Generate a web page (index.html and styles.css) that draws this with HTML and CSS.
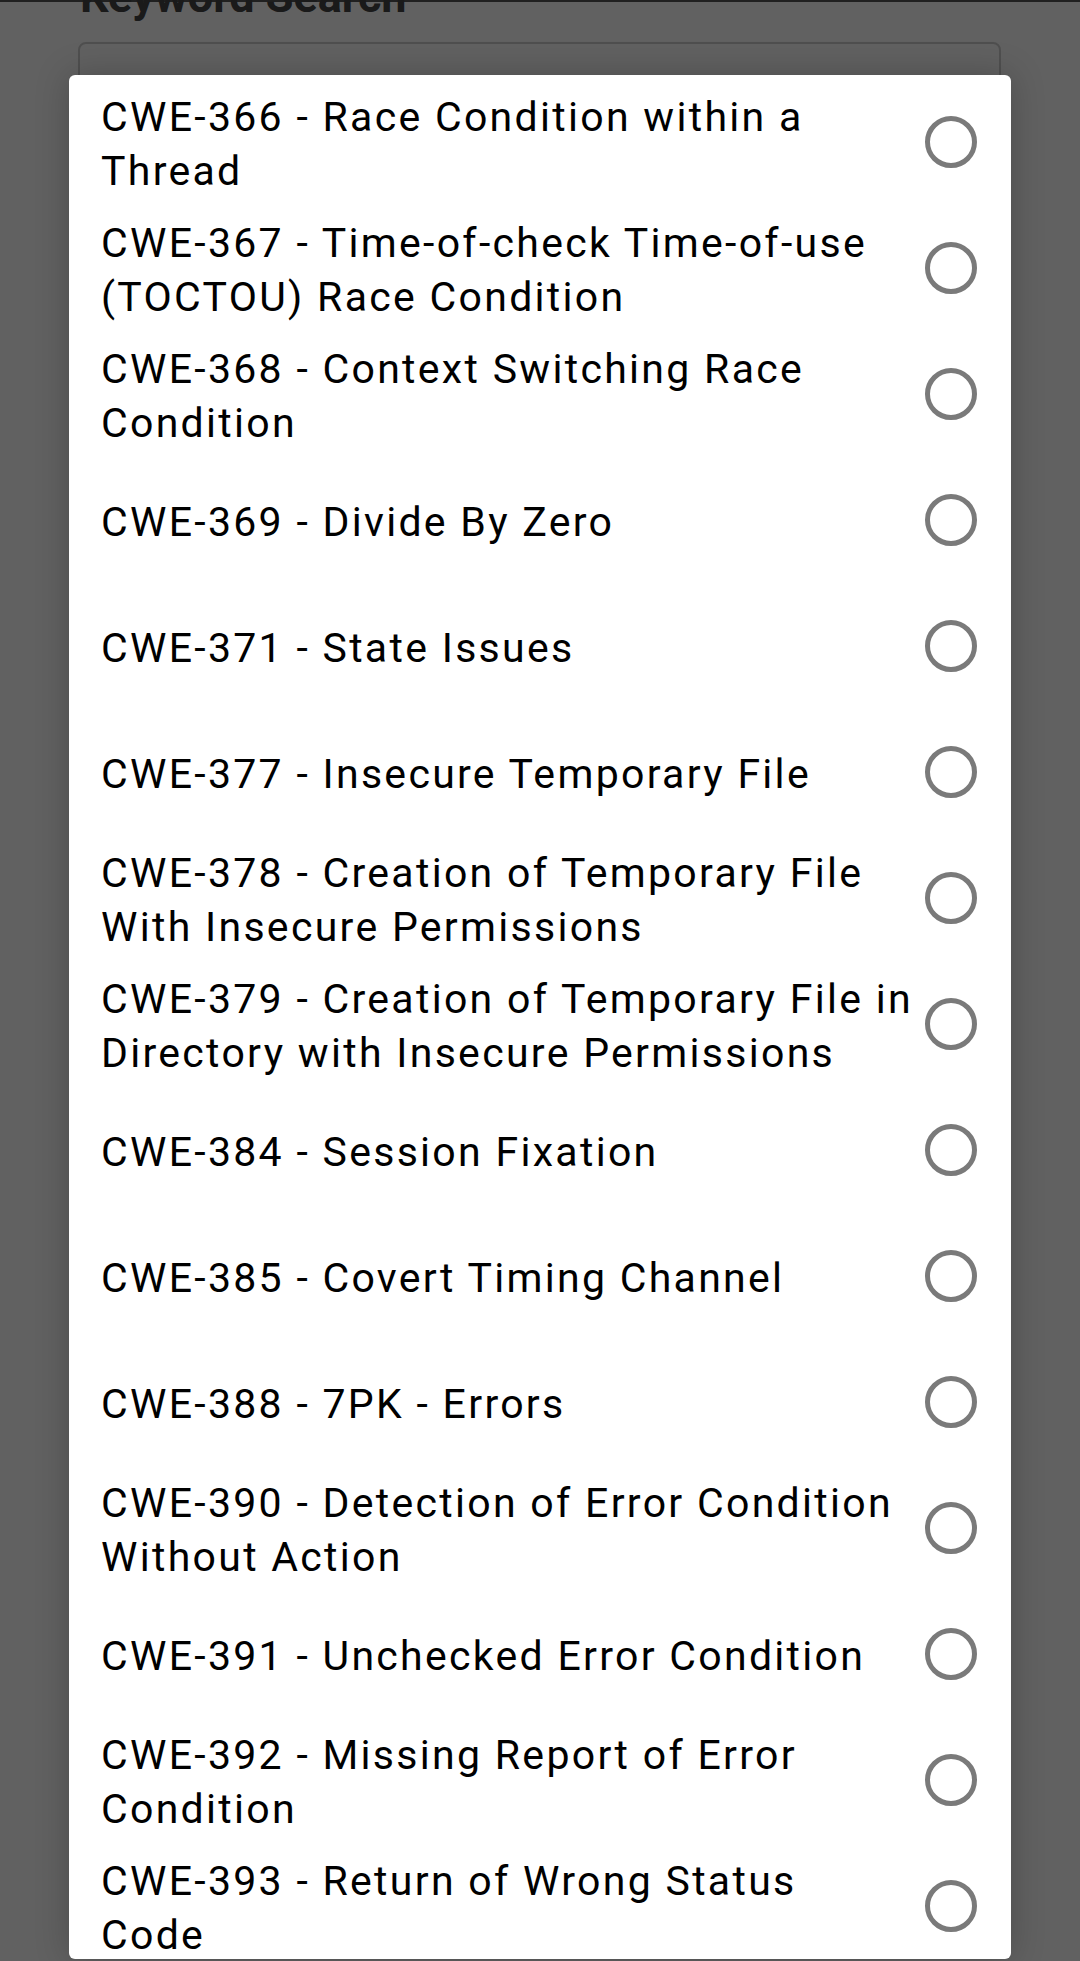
FILE: index.html
```html
<!DOCTYPE html>
<html>
<head>
<meta charset="utf-8">
<link rel="stylesheet" href="styles.css">
</head>
<body>
<div class="page">
  <h2 class="page-title">Keyword Search</h2>
  <div class="search-box"></div>
</div>
<div class="scrim"></div>
<div class="dialog">
  <ul class="options">
    <li class="option"><span class="label">CWE-366 - Race Condition within a<br>Thread</span><span class="radio"></span></li>
    <li class="option"><span class="label">CWE-367 - Time-of-check Time-of-use<br>(TOCTOU) Race Condition</span><span class="radio"></span></li>
    <li class="option"><span class="label">CWE-368 - Context Switching Race<br>Condition</span><span class="radio"></span></li>
    <li class="option"><span class="label">CWE-369 - Divide By Zero</span><span class="radio"></span></li>
    <li class="option"><span class="label">CWE-371 - State Issues</span><span class="radio"></span></li>
    <li class="option"><span class="label">CWE-377 - Insecure Temporary File</span><span class="radio"></span></li>
    <li class="option"><span class="label">CWE-378 - Creation of Temporary File<br>With Insecure Permissions</span><span class="radio"></span></li>
    <li class="option"><span class="label">CWE-379 - Creation of Temporary File in<br>Directory with Insecure Permissions</span><span class="radio"></span></li>
    <li class="option"><span class="label">CWE-384 - Session Fixation</span><span class="radio"></span></li>
    <li class="option"><span class="label">CWE-385 - Covert Timing Channel</span><span class="radio"></span></li>
    <li class="option"><span class="label">CWE-388 - 7PK - Errors</span><span class="radio"></span></li>
    <li class="option"><span class="label">CWE-390 - Detection of Error Condition<br>Without Action</span><span class="radio"></span></li>
    <li class="option"><span class="label">CWE-391 - Unchecked Error Condition</span><span class="radio"></span></li>
    <li class="option"><span class="label">CWE-392 - Missing Report of Error<br>Condition</span><span class="radio"></span></li>
    <li class="option"><span class="label">CWE-393 - Return of Wrong Status<br>Code</span><span class="radio"></span></li>
  </ul>
</div>
</body>
</html>
```

FILE: styles.css
```css
html, body {
  margin: 0;
  padding: 0;
}
body {
  width: 1080px;
  height: 1961px;
  overflow: hidden;
  position: relative;
  background: #ffffff;
  font-family: Roboto, "Noto Sans", sans-serif;
}
.page {
  padding: 0 79px 0 78px;
  border-top: 2px solid #555;
}
.page-title {
  margin: -31px 0 0 2px;
  font-size: 45px;
  line-height: 52px;
  font-weight: 700;
  color: #444;
  white-space: nowrap;
}
.search-box {
  margin-top: 19px;
  height: 140px;
  border: 2px solid #d0d0d0;
  border-radius: 8px;
  background: #ffffff;
}
.scrim {
  position: absolute;
  inset: 0;
  background: rgba(0, 0, 0, 0.62);
}
.dialog {
  position: absolute;
  left: 69px;
  top: 75px;
  width: 942px;
  height: 1884px;
  background: #ffffff;
  border-radius: 6px;
  overflow: hidden;
  box-shadow: 0 0 34px rgba(0, 0, 0, 0.22);
}
.options {
  list-style: none;
  margin: 0;
  padding: 4px 0 0 0;
}
.option {
  height: 126px;
  display: flex;
  align-items: center;
  padding: 0 34px 0 32px;
}
.label {
  flex: 1;
  padding-top: 4px;
  font-size: 41px;
  line-height: 54px;
  letter-spacing: 2.3px;
  color: #000000;
  white-space: nowrap;
}
.radio {
  flex: none;
  width: 42px;
  height: 42px;
  border: 5px solid #7a7a7a;
  border-radius: 50%;
}
```
